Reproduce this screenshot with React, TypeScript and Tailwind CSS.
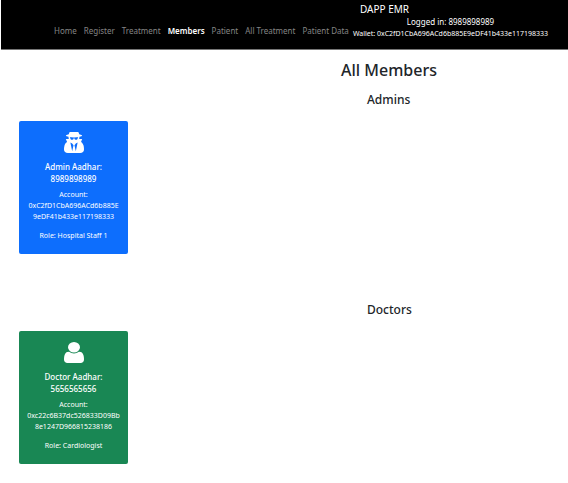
import type { ReactNode } from "react";

const navItems = ["Home", "Register", "Treatment", "Members", "Patient", "All Treatment", "Patient Data"];

function SecretIcon() {
  return (
    <svg viewBox="0 128 1408 1536" preserveAspectRatio="none" className="h-[21px] w-5" fill="currentColor" aria-hidden="true">
      <path d="M576 1536l96-448-96-128-128-64zm256 0l128-640-128 64-96 128zm160-1010q-2-4-4-6-10-8-96-8-70 0-167 19-7 2-21 2t-21-2q-97-19-167-19-86 0-96 8-2 2-4 6 2 18 4 27 2 3 7.5 6.5t7.5 10.5q2 4 7.5 20.5t7 20.5 7.5 17 8.5 17 9 14 12 13.5 14 9.5 17.5 8 20.5 4 24.5 2q36 0 59-12.5t32.5-30 14.5-34.5 11.5-29.5 17.5-12.5h12q11 0 17.5 12.5t11.5 29.5 14.5 34.5 32.5 30 59 12.5q13 0 24.5-2t20.5-4 17.5-8 14-9.5 12-13.5 9-14 8.5-17 7.5-17 7-20.5 7.5-20.5q2-7 7.5-10.5t7.5-6.5q2-9 4-27zm416 879q0 121-73 190t-194 69h-874q-121 0-194-69t-73-190q0-61 4.5-118t19-125.5 37.5-123.5 63.5-103.5 93.5-74.5l-90-220h214q-22-64-22-128 0-12 2-32-194-40-194-96 0-57 210-99 17-62 51.5-134t70.5-114q32-37 76-37 30 0 84 31t84 31 84-31 84-31q44 0 76 37 36 42 70.5 114t51.5 134q210 42 210 99 0 56-194 96 7 81-20 160h214l-82 225q63 33 107.5 96.5t65.5 143.5 29 151.5 8 157.5z" />
    </svg>
  );
}

function UserIcon() {
  return (
    <svg viewBox="0 128 1280 1536" preserveAspectRatio="none" className="h-[21px] w-5" fill="currentColor" aria-hidden="true">
      <path d="M1280 1399q0 109-62.5 187t-150.5 78h-854q-88 0-150.5-78t-62.5-187q0-85 8.5-160.5t31.5-152 58.5-131 94-89 134.5-34.5q131 128 313 128t313-128q76 0 134.5 34.5t94 89 58.5 131 31.5 152 8.5 160.5zm-256-887q0 159-112.5 271.5t-271.5 112.5-271.5-112.5-112.5-271.5 112.5-271.5 271.5-112.5 271.5 112.5 112.5 271.5z" />
    </svg>
  );
}

type MemberProps = {
  color: string;
  icon: ReactNode;
  kind: string;
  aadhar: string;
  account: [string, string];
  role: string;
};

function MemberCard({ color, icon, kind, aadhar, account, role }: MemberProps) {
  return (
    <article className={`flex w-[109px] flex-col items-center rounded-[2px] pt-[11px] pb-[13px] text-center text-white ${color}`}>
      {icon}
      <h3 className="mt-2 text-[8px] leading-[12px] font-medium">
        {kind} Aadhar:
        <br />
        {aadhar}
      </h3>
      <p className="mt-1 text-[7px] leading-[11px]">
        Account:
        <br />
        {account[0]}
        <br />
        {account[1]}
      </p>
      <p className="mt-2 text-[7px] leading-[11px]">Role: {role}</p>
    </article>
  );
}

export default function App() {
  return (
    <div className="min-h-screen overflow-hidden bg-white font-['Noto_Sans','Open_Sans',sans-serif] text-[#212529]">
      <header className="ml-px border-b border-[#777] bg-black pb-[10px] text-white">
        <p className="pt-[2px] pl-[359px] text-[10px] leading-[14px]">DAPP EMR</p>
        <div className="flex items-end">
          <nav className="flex gap-[7px] pb-[3px] pl-[53px] text-[8px] leading-[11px] whitespace-nowrap text-[#858585]">
            {navItems.map((item) => (
              <a key={item} href="#" className={item === "Members" ? "font-semibold text-white" : ""}>
                {item}
              </a>
            ))}
          </nav>
          <div className="ml-1 text-center whitespace-nowrap">
            <p className="text-[8px] leading-[12px]">Logged in: 8989898989</p>
            <p className="text-[7px] leading-[11px]">Wallet: 0xC2fD1CbA696ACd6b885E9eDF41b433e117198333</p>
          </div>
        </div>
      </header>

      <main className="px-[19px]">
        <h1 className="pt-[10px] pl-[322px] text-[16px] leading-[20px] font-medium">All Members</h1>

        <section>
          <h2 className="mt-3 pl-[348px] text-[12px] leading-[16px] font-medium">Admins</h2>
          <div className="mt-[13px]">
            <MemberCard
              color="bg-[#0d6efd]"
              icon={<SecretIcon />}
              kind="Admin"
              aadhar="8989898989"
              account={["0xC2fD1CbA696ACd6b885E", "9eDF41b433e117198333"]}
              role="Hospital Staff 1"
            />
          </div>
        </section>

        <section>
          <h2 className="mt-12 pl-[348px] text-[12px] leading-[16px] font-medium">Doctors</h2>
          <div className="mt-[13px]">
            <MemberCard
              color="bg-[#198754]"
              icon={<UserIcon />}
              kind="Doctor"
              aadhar="5656565656"
              account={["0xc22c6B37dc526833D09Bb", "8e1247D966815238186"]}
              role="Cardiologist"
            />
          </div>
        </section>
      </main>
    </div>
  );
}
